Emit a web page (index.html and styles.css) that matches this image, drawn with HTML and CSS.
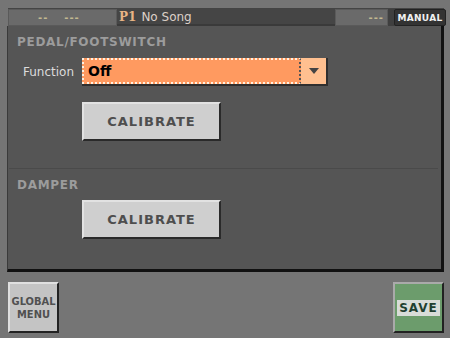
FILE: index.html
```html
<!DOCTYPE html>
<html>
<head>
<meta charset="utf-8">
<link rel="stylesheet" href="styles.css">
</head>
<body>
<div class="screen">
  <div class="topbar">
    <div class="seg seg-left"><span class="dash">--</span><span class="dash">---</span></div>
    <div class="seg seg-song"><span class="p1">P1</span><span class="song">No Song</span></div>
    <div class="seg seg-right"><span class="dash">---</span></div>
    <div class="mode">MANUAL</div>
  </div>
  <div class="panel">
    <div class="section">
      <div class="heading">PEDAL/FOOTSWITCH</div>
      <div class="row">
        <span class="label">Function</span>
        <div class="combo">
          <div class="combo-value">Off</div>
          <div class="combo-btn"><svg width="10" height="6" viewBox="0 0 10 6"><path d="M0 0 H10 L5 6 Z" fill="#444"/></svg></div>
        </div>
      </div>
      <div class="btn-row"><div class="btn">CALIBRATE</div></div>
    </div>
    <div class="divider"></div>
    <div class="section">
      <div class="heading">DAMPER</div>
      <div class="btn-row btn-row2"><div class="btn">CALIBRATE</div></div>
    </div>
  </div>
  <div class="footer">
    <div class="sq sq-global">GLOBAL<br>MENU</div>
    <div class="sq sq-save"><span class="save-label">SAVE</span></div>
  </div>
</div>
</body>
</html>
```
FILE: styles.css
```css
* { box-sizing: border-box; }
html, body { margin: 0; padding: 0; }
body {
  width: 450px;
  height: 338px;
  background: #757575;
  font-family: "DejaVu Sans", sans-serif;
  overflow: hidden;
}
.screen {
  width: 450px;
  height: 338px;
  padding: 8px 6px 0 7px;
  display: flex;
  flex-direction: column;
}
.topbar {
  height: 18px;
  display: flex;
  align-items: stretch;
  background: #3f3f3f;
  border-top: 1px solid #444;
  margin-left: 1px;
}
.seg {
  display: flex;
  align-items: center;
}
.seg-left {
  width: 109px;
  background: #6a6a6a;
  border: 1px solid #5a5a5a;
  padding-left: 29px;
  gap: 16px;
}
.dash {
  color: #c2b890;
  font-size: 10px;
  font-weight: bold;
  letter-spacing: 1px;
}
.seg-song {
  width: 218px;
  background: #454545;
  border-bottom: 2px solid #3a3a3a;
  padding-left: 2px;
  gap: 5px;
}
.p1 {
  color: #e8b484;
  font-family: "DejaVu Serif", serif;
  font-weight: bold;
  font-size: 12px;
}
.song {
  color: #ddd0c8;
  font-size: 12px;
}
.seg-right {
  width: 53px;
  background: #6a6a6a;
  border: 1px solid #5a5a5a;
  justify-content: flex-end;
  padding-right: 3px;
}
.mode {
  margin-left: 6px;
  width: 52px;
  background: #333;
  border: 1px solid #222;
  border-radius: 2px;
  color: #f0f0f0;
  font-size: 9px;
  font-weight: bold;
  letter-spacing: 0.3px;
  display: flex;
  align-items: center;
  justify-content: center;
  margin-right: -2px;
}
.panel {
  height: 246px;
  background: #555555;
  border-left: 1px solid #3a3a3a;
  border-right: 3px solid #111;
  border-bottom: 3px solid #111;
  display: flex;
  flex-direction: column;
}
.section {
  padding-left: 9px;
}
.heading {
  color: #9c9c9c;
  font-size: 12px;
  font-weight: bold;
  letter-spacing: 0.7px;
  margin-top: 9px;
  line-height: 14px;
}
.row {
  display: flex;
  align-items: center;
  margin-top: 9px;
}
.label {
  color: #dcdcdc;
  font-size: 12px;
  width: 65px;
  padding-left: 6px;
}
.combo {
  display: flex;
  height: 28px;
  width: 246px;
  border-bottom: 2px solid #2f2f2f;
  border-right: 2px solid #2f2f2f;
}
.combo-value {
  flex: 1;
  background: #ff9a60;
  border: 2px dotted #fff0e0;
  border-right: 2px dotted #555;
  color: #000;
  font-weight: bold;
  font-size: 14px;
  padding-left: 4px;
  display: flex;
  align-items: center;
}
.combo-btn {
  width: 25px;
  background: #ffc090;
  display: flex;
  align-items: center;
  justify-content: center;
}
.btn-row {
  padding-left: 65px;
  margin-top: 16px;
}
.btn-row2 { margin-top: 8px; }
.btn {
  width: 139px;
  height: 39px;
  background: #cfcfcf;
  border-top: 2px solid #e2e2e2;
  border-left: 2px solid #e2e2e2;
  border-right: 2px solid #2a2a2a;
  border-bottom: 2px solid #2a2a2a;
  color: #4e4e4e;
  font-size: 13px;
  font-weight: bold;
  letter-spacing: 1px;
  display: flex;
  align-items: center;
  justify-content: center;
}
.divider {
  height: 1px;
  background: #4a4a4a;
  margin: 27px 3px 0 1px;
}
.footer {
  display: flex;
  justify-content: space-between;
  padding-top: 10px;
  padding-left: 1px;
}
.sq {
  width: 51px;
  height: 51px;
  border-top: 2px solid #e0e0e0;
  border-left: 2px solid #e0e0e0;
  border-right: 2px solid #222;
  border-bottom: 2px solid #222;
  display: flex;
  align-items: center;
  justify-content: center;
  font-weight: bold;
  text-align: center;
}
.sq-global {
  background: #c4c4c4;
  color: #505050;
  font-family: "DejaVu Sans Condensed", "DejaVu Sans", sans-serif;
  font-size: 11px;
  line-height: 13px;
}
.sq-save {
  background: #6c9c6c;
  border-top-color: #aaa;
  border-left-color: #aaa;
}
.save-label {
  background: #d8dcd8;
  color: #1f3f2f;
  font-size: 12px;
  padding: 1px 2px;
  letter-spacing: 1px;
}
```
